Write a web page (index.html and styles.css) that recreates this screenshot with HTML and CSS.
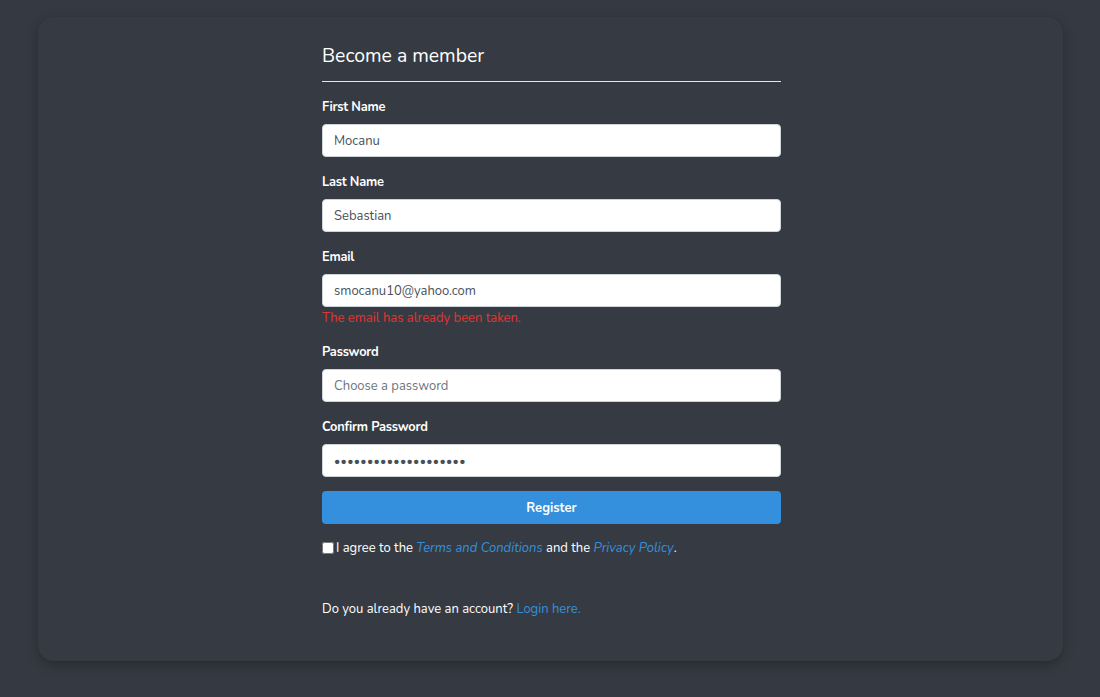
FILE: index.html
```html
<!DOCTYPE html>
<html lang="en">
<head>
<meta charset="utf-8">
<title>Register</title>
<link rel="stylesheet" href="styles.css">
</head>
<body>
<div class="page">
  <div class="card">
    <form class="form">
      <h2 class="title">Become a member</h2>
      <hr class="rule">
      <div class="group">
        <label class="label">First Name</label>
        <input class="input" type="text" value="Mocanu">
      </div>
      <div class="group">
        <label class="label">Last Name</label>
        <input class="input" type="text" value="Sebastian">
      </div>
      <div class="group">
        <label class="label">Email</label>
        <input class="input" type="text" value="smocanu10@yahoo.com">
        <div class="error">The email has already been taken.</div>
      </div>
      <div class="group">
        <label class="label">Password</label>
        <input class="input" type="password" placeholder="Choose a password">
      </div>
      <div class="group">
        <label class="label">Confirm Password</label>
        <input class="input" type="password" value="12345678901234567890">
      </div>
      <button class="btn" type="button">Register</button>
      <div class="agree">
        <input class="check" type="checkbox">
        <span>I agree to the <a class="link ital" href="#">Terms and Conditions</a> and the <a class="link ital" href="#">Privacy Policy</a>.</span>
      </div>
      <p class="login">Do you already have an account? <a class="link" href="#">Login here.</a></p>
    </form>
  </div>
</div>
</body>
</html>
```
FILE: styles.css
```css
html, body {
  margin: 0;
  padding: 0;
  background: #353a42;
}
body {
  font-family: "Nunito", "Lato", "Noto Sans", sans-serif;
  font-size: 13px;
  color: #ffffff;
}
.page {
  padding: 17px 37px 37px 38px;
}
.card {
  background: #363b43;
  border-radius: 16px;
  box-shadow: 0 4px 12px rgba(0, 0, 0, 0.28);
  padding: 27px 0 42px;
  display: flex;
  justify-content: center;
}
.form {
  width: 459px;
  margin-left: 2px;
}
.title {
  margin: 0;
  font-size: 19.4px;
  font-weight: 400;
  line-height: 24px;
  color: #ffffff;
}
.rule {
  margin: 13px 0 14px;
  border: 0;
  border-top: 1px solid #e4e6e8;
  height: 0;
}
.group {
  margin-bottom: 14px;
}
.label {
  display: block;
  font-weight: 700;
  font-size: 12.8px;
  line-height: 20px;
  padding-top: 1px;
  margin-bottom: 7px;
  letter-spacing: -0.2px;
}
.input {
  display: block;
  box-sizing: border-box;
  width: 100%;
  height: 33px;
  padding: 0 11px;
  border: 1px solid #ced4da;
  border-radius: 4px;
  background: #ffffff;
  font-family: inherit;
  font-size: 13px;
  color: #495057;
  outline: none;
}
.input::placeholder {
  color: #6c757d;
}
.input[type="password"] {
  font-size: 12px;
  letter-spacing: 0.3px;
}
.input[type="password"]::placeholder {
  font-size: 13px;
  letter-spacing: 0;
}
.error {
  margin-top: 2px;
  font-size: 13px;
  line-height: 18px;
  color: #e3342f;
}
.btn {
  display: block;
  width: 100%;
  height: 33px;
  border: 0;
  border-radius: 4px;
  background: #3490dc;
  color: #ffffff;
  font-family: inherit;
  font-weight: 700;
  font-size: 13px;
}
.agree {
  margin-top: 14px;
  display: flex;
  align-items: center;
  line-height: 20px;
  font-size: 13px;
}
.check {
  margin: 0 2px 0 0;
  width: 12px;
  height: 12px;
}
.link {
  color: #3490dc;
  text-decoration: none;
}
.ital {
  font-style: italic;
}
.login {
  margin: 41px 0 0;
  line-height: 20px;
  font-size: 13px;
}
```
